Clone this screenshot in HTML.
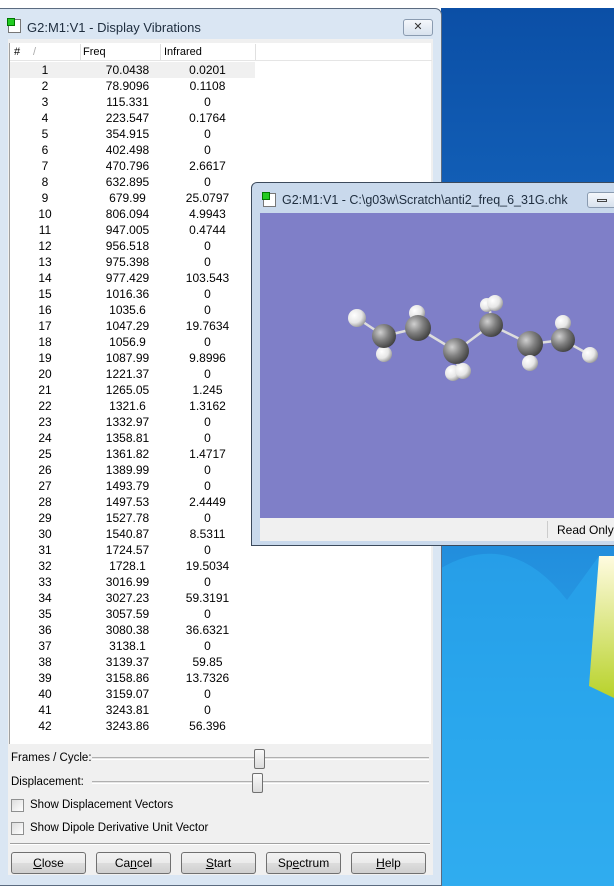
<!DOCTYPE html>
<html><head><meta charset="utf-8"><style>
*{margin:0;padding:0;box-sizing:border-box}
body{width:614px;height:886px;overflow:hidden;position:relative;background:#fff;font-family:"Liberation Sans",sans-serif;font-size:12px;color:#000}
.desk{position:absolute;left:441px;top:8px;width:173px;height:878px;background:linear-gradient(180deg,#0b4fa6 0%,#1565bd 30%,#1f86d8 55%,#2aa4ea 80%,#3ab2f0 100%)}
.dlg{position:absolute;left:0;top:8px;width:442px;height:878px;background:#dae6f3;border:1px solid #5b6b80;border-left:none;border-radius:0 7px 0 0}
.title{position:absolute;left:27px;top:11px;font-size:13px;color:#1e2d3e}
.ico{position:absolute;width:13px;height:14px;border:1px solid #777;background:#fff}
.ico:before{content:"";position:absolute;left:-2px;top:-2px;width:6px;height:6px;background:#2c2;border:1px solid #070}
.xbtn{position:absolute;left:403px;top:10px;width:30px;height:17px;border:1px solid #8a9bb0;border-radius:3px;background:linear-gradient(#f4f7fb,#d8e2ee);text-align:center;font-size:11px;line-height:15px;color:#333}
.client{position:absolute;left:8px;top:39px;width:425px;height:836px;background:#f0f0f0}
.list{position:absolute;left:9px;top:43px;width:422px;height:701px;background:#fff;border-left:1px solid #a0a0a0}
.hdr{position:absolute;left:0;top:0;height:18px;width:422px;border-bottom:1px solid #e5e5e5}
.hdr span{position:absolute;top:3px;font-size:11px}
.hdr i{position:absolute;top:1px;width:1px;height:16px;background:#e0e0e0}
.rows{position:absolute;left:0;top:19px;width:422px}
.r{height:16px;line-height:16px;position:relative;font-size:12px}
.r b{font-weight:normal;position:absolute;text-align:center}
.r b:nth-child(1){left:20px;width:30px}
.r b:nth-child(2){left:80px;width:75px}
.r b:nth-child(3){left:160px;width:75px}
.sel{background:#f0f0f0;width:245px}
.lbl{position:absolute;left:11px;font-size:11.5px}
.track{position:absolute;left:92px;width:337px;height:3px;border-top:1px solid #b0b0b0;border-bottom:1px solid #fff;background:#e6e6e6}
.thumb{position:absolute;width:11px;height:20px;border:1px solid #707070;border-radius:2px;background:linear-gradient(#fafafa,#dcdcdc)}
.cb{position:absolute;left:11px;width:13px;height:13px;border:1px solid #8e8f8f;background:linear-gradient(135deg,#ddd,#fff)}
.btn{position:absolute;top:852px;width:75px;height:22px;border:1px solid #707070;border-radius:3px;background:linear-gradient(#f2f2f2 0%,#ebebeb 50%,#dddddd 51%,#cfcfcf 100%);text-align:center;line-height:20px;font-size:12px}
.w2{position:absolute;left:251px;top:182px;width:370px;height:364px;background:#c9d9ec;border:1px solid #3c4a5c;border-radius:6px 0 0 0}
.w2 .t{position:absolute;left:30px;top:10px;font-size:12.5px;color:#1e2d3e;white-space:nowrap}
.canvas{position:absolute;left:8px;top:30px;width:362px;height:305px;background:#7f7fc8}
.status{position:absolute;left:8px;top:335px;width:362px;height:23px;background:#f0f0f0}
</style></head><body>
<div class="desk">
<svg width="173" height="878" style="position:absolute;left:0;top:0">
<defs><linearGradient id="g" x1="0" y1="0" x2="0" y2="1"><stop offset="0" stop-color="#fffbe0"/><stop offset="1" stop-color="#b8d22a"/></linearGradient></defs>
<path d="M0 560 Q70 520 126 592 L158 548 L173 548 L173 878 L0 878Z" fill="#29a8ee" opacity=".6"/>
<path d="M158 548 L173 548 L173 690 L148 678Z" fill="url(#g)"/>
</svg>
</div>
<div class="dlg">
<div class="ico" style="left:8px;top:10px"></div>
<div class="title">G2:M1:V1 - Display Vibrations</div>
<div class="xbtn">✕</div>
</div>
<div class="client"></div>
<div class="list">
<div class="hdr"><span style="left:4px">#</span><span style="left:23px;color:#aaa">/</span><i style="left:70px"></i><span style="left:73px">Freq</span><i style="left:150px"></i><span style="left:154px">Infrared</span><i style="left:245px"></i></div>
<div class="rows">
<div class="r sel"><b>1</b><b>70.0438</b><b>0.0201</b></div>
<div class="r"><b>2</b><b>78.9096</b><b>0.1108</b></div>
<div class="r"><b>3</b><b>115.331</b><b>0</b></div>
<div class="r"><b>4</b><b>223.547</b><b>0.1764</b></div>
<div class="r"><b>5</b><b>354.915</b><b>0</b></div>
<div class="r"><b>6</b><b>402.498</b><b>0</b></div>
<div class="r"><b>7</b><b>470.796</b><b>2.6617</b></div>
<div class="r"><b>8</b><b>632.895</b><b>0</b></div>
<div class="r"><b>9</b><b>679.99</b><b>25.0797</b></div>
<div class="r"><b>10</b><b>806.094</b><b>4.9943</b></div>
<div class="r"><b>11</b><b>947.005</b><b>0.4744</b></div>
<div class="r"><b>12</b><b>956.518</b><b>0</b></div>
<div class="r"><b>13</b><b>975.398</b><b>0</b></div>
<div class="r"><b>14</b><b>977.429</b><b>103.543</b></div>
<div class="r"><b>15</b><b>1016.36</b><b>0</b></div>
<div class="r"><b>16</b><b>1035.6</b><b>0</b></div>
<div class="r"><b>17</b><b>1047.29</b><b>19.7634</b></div>
<div class="r"><b>18</b><b>1056.9</b><b>0</b></div>
<div class="r"><b>19</b><b>1087.99</b><b>9.8996</b></div>
<div class="r"><b>20</b><b>1221.37</b><b>0</b></div>
<div class="r"><b>21</b><b>1265.05</b><b>1.245</b></div>
<div class="r"><b>22</b><b>1321.6</b><b>1.3162</b></div>
<div class="r"><b>23</b><b>1332.97</b><b>0</b></div>
<div class="r"><b>24</b><b>1358.81</b><b>0</b></div>
<div class="r"><b>25</b><b>1361.82</b><b>1.4717</b></div>
<div class="r"><b>26</b><b>1389.99</b><b>0</b></div>
<div class="r"><b>27</b><b>1493.79</b><b>0</b></div>
<div class="r"><b>28</b><b>1497.53</b><b>2.4449</b></div>
<div class="r"><b>29</b><b>1527.78</b><b>0</b></div>
<div class="r"><b>30</b><b>1540.87</b><b>8.5311</b></div>
<div class="r"><b>31</b><b>1724.57</b><b>0</b></div>
<div class="r"><b>32</b><b>1728.1</b><b>19.5034</b></div>
<div class="r"><b>33</b><b>3016.99</b><b>0</b></div>
<div class="r"><b>34</b><b>3027.23</b><b>59.3191</b></div>
<div class="r"><b>35</b><b>3057.59</b><b>0</b></div>
<div class="r"><b>36</b><b>3080.38</b><b>36.6321</b></div>
<div class="r"><b>37</b><b>3138.1</b><b>0</b></div>
<div class="r"><b>38</b><b>3139.37</b><b>59.85</b></div>
<div class="r"><b>39</b><b>3158.86</b><b>13.7326</b></div>
<div class="r"><b>40</b><b>3159.07</b><b>0</b></div>
<div class="r"><b>41</b><b>3243.81</b><b>0</b></div>
<div class="r"><b>42</b><b>3243.86</b><b>56.396</b></div>
</div></div>
<div class="lbl" style="top:752px">Frames / Cycle:</div>
<div class="track" style="top:757px"></div>
<div class="thumb" style="left:254px;top:749px"></div>
<div class="lbl" style="top:776px">Displacement:</div>
<div class="track" style="top:781px"></div>
<div class="thumb" style="left:252px;top:773px"></div>
<div class="cb" style="top:799px"></div><div class="lbl" style="left:30px;top:799px">Show Displacement Vectors</div>
<div class="cb" style="top:822px"></div><div class="lbl" style="left:30px;top:822px">Show Dipole Derivative Unit Vector</div>
<div style="position:absolute;left:10px;top:843px;width:420px;height:2px;border-top:1px solid #a0a0a0;border-bottom:1px solid #fff"></div>
<div class="btn" style="left:11px"><u>C</u>lose</div>
<div class="btn" style="left:96px">Ca<u>n</u>cel</div>
<div class="btn" style="left:181px"><u>S</u>tart</div>
<div class="btn" style="left:266px">Sp<u>e</u>ctrum</div>
<div class="btn" style="left:351px"><u>H</u>elp</div>

<div class="w2">
<div class="ico" style="left:11px;top:10px"></div>
<div class="t">G2:M1:V1 - C:\g03w\Scratch\anti2_freq_6_31G.chk</div>
<div style="position:absolute;left:335px;top:9px;width:30px;height:16px;border:1px solid #8a9bb0;border-radius:3px;background:linear-gradient(#f4f7fb,#d8e2ee)"><div style="margin:6px auto;width:10px;height:3px;border:1px solid #444"></div></div>
<div class="canvas">
<svg width="362" height="305">
<defs>
<radialGradient id="c" cx=".35" cy=".35" r=".7"><stop offset="0" stop-color="#d0d0d0"/><stop offset=".5" stop-color="#808080"/><stop offset="1" stop-color="#404040"/></radialGradient>
<radialGradient id="h" cx=".35" cy=".35" r=".7"><stop offset="0" stop-color="#fff"/><stop offset=".6" stop-color="#e6e6e6"/><stop offset="1" stop-color="#999"/></radialGradient>
</defs>
<g stroke="#ddd" stroke-width="2.5">
<line x1="97" y1="105" x2="124" y2="123"/><line x1="124" y1="123" x2="158" y2="115"/><line x1="158" y1="115" x2="196" y2="138"/><line x1="196" y1="138" x2="231" y2="112"/><line x1="231" y1="112" x2="270" y2="131"/><line x1="270" y1="131" x2="303" y2="127"/><line x1="303" y1="127" x2="330" y2="142"/>
<line x1="124" y1="123" x2="124" y2="141"/><line x1="158" y1="115" x2="157" y2="100"/><line x1="196" y1="138" x2="198" y2="156"/><line x1="231" y1="112" x2="230" y2="97"/><line x1="270" y1="131" x2="270" y2="150"/><line x1="303" y1="127" x2="303" y2="110"/>
</g>
<circle cx="97" cy="105" r="9" fill="url(#h)"/>
<circle cx="157" cy="100" r="8" fill="url(#h)"/>
<circle cx="124" cy="141" r="8" fill="url(#h)"/>
<circle cx="124" cy="123" r="12" fill="url(#c)"/>
<circle cx="158" cy="115" r="13" fill="url(#c)"/>
<circle cx="227" cy="92" r="7" fill="url(#h)"/><circle cx="235" cy="90" r="8" fill="url(#h)"/>
<circle cx="231" cy="112" r="12" fill="url(#c)"/>
<circle cx="196" cy="138" r="13" fill="url(#c)"/>
<circle cx="193" cy="160" r="8" fill="url(#h)"/><circle cx="203" cy="158" r="8" fill="url(#h)"/>
<circle cx="303" cy="110" r="8" fill="url(#h)"/>
<circle cx="270" cy="131" r="13" fill="url(#c)"/>
<circle cx="270" cy="150" r="8" fill="url(#h)"/>
<circle cx="303" cy="127" r="12" fill="url(#c)"/>
<circle cx="330" cy="142" r="8" fill="url(#h)"/>
</svg>
</div>
<div class="status"><div style="position:absolute;left:287px;top:3px;height:17px;border-left:1px solid #ccc"></div><div style="position:absolute;left:297px;top:5px;font-size:12px">Read Only</div></div>
</div>
</body></html>
